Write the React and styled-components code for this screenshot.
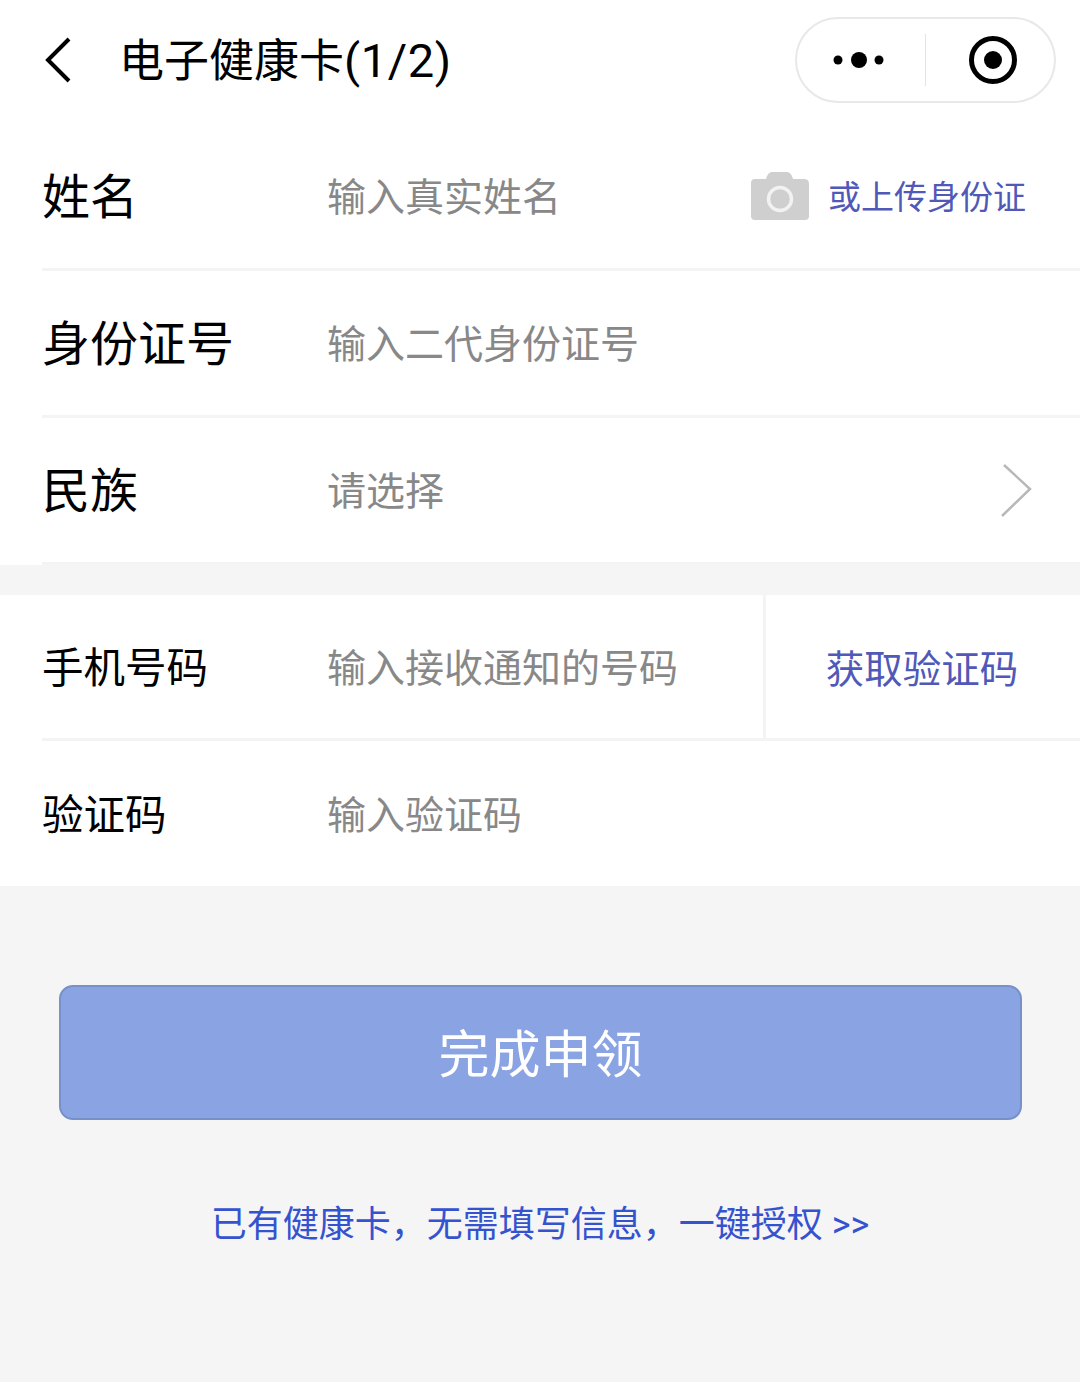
import React from "react";
import styled, { createGlobalStyle } from "styled-components";

const GlobalStyle = createGlobalStyle`
  html, body {
    margin: 0;
    padding: 0;
    background: #f5f5f5;
  }
  * {
    box-sizing: border-box;
  }
`;

const Page = styled.div`
  width: 1080px;
  height: 1382px;
  overflow: hidden;
  background: #f5f5f5;
  font-family: Roboto, "Noto Sans CJK SC", sans-serif;
  color: #000;
`;

const NavBar = styled.header`
  height: 124px;
  background: #fff;
  display: flex;
  align-items: center;
  padding: 0 24px 0 45px;
`;

const BackIcon = styled.svg`
  width: 28px;
  height: 46px;
  margin-top: -4px;
  flex: none;
`;

const NavTitle = styled.h1`
  margin: -2px 0 0 46px;
  flex: 1;
  font-size: 45px;
  font-weight: 400;
  line-height: 60px;
  color: #000;
`;

const TitleCount = styled.span`
  font-size: 47px;
  letter-spacing: 0.6px;
`;

const Capsule = styled.div`
  width: 261px;
  height: 86px;
  margin-top: -4px;
  border: 2px solid #e8e8e8;
  border-radius: 43px;
  display: flex;
  align-items: center;
`;

const CapsuleSide = styled.div`
  flex: none;
  width: ${(p) => (p.$divided ? 129 : 128)}px;
  height: 52px;
  display: flex;
  align-items: center;
  justify-content: center;
  padding-left: ${(p) => (p.$divided ? 6 : 0)}px;
  padding-right: ${(p) => (p.$divided ? 0 : 4)}px;
  border-left: ${(p) => (p.$divided ? "1px solid #e4e4e4" : "none")};
`;

const Section = styled.section`
  background: #fff;
`;

const Row = styled.div`
  height: ${(p) => p.$height || 147}px;
  margin-left: 42px;
  display: flex;
  align-items: center;
  border-bottom: ${(p) => (p.$plain ? "none" : "3px solid #f4f4f4")};
`;

const Label = styled.div`
  width: 285px;
  flex: none;
  padding-top: ${(p) => (p.$small ? 5 : 3)}px;
  font-size: ${(p) => (p.$small ? 41.5 : 48)}px;
  line-height: 60px;
  color: #000;
`;

const Placeholder = styled.div`
  flex: 1;
  padding-top: ${(p) => (p.$low ? 5 : 3)}px;
  font-size: 39px;
  line-height: 54px;
  color: #888;
`;

const UploadWrap = styled.div`
  display: flex;
  align-items: center;
  gap: 19px;
  padding: 0 54px 0 0;
`;

const UploadText = styled.span`
  padding-top: 3px;
  font-size: 33px;
  line-height: 46px;
  color: #5058b8;
`;

const Chevron = styled.svg`
  width: 34px;
  height: 56px;
  margin-right: 48px;
  flex: none;
`;

const Gap = styled.div`
  height: 30px;
`;

const CodeButton = styled.div`
  width: 317px;
  align-self: stretch;
  display: flex;
  align-items: center;
  justify-content: center;
  padding: 0 2px 2px 0;
  border-left: 3px solid #f4f4f4;
  font-size: 38.5px;
  color: #5058b8;
`;

const SubmitWrap = styled.div`
  padding: 99px 58px 0 59px;
`;

const SubmitButton = styled.button`
  display: block;
  width: 100%;
  height: 135px;
  padding: 0 0 4px;
  border: 2px solid #7790c8;
  border-radius: 14px;
  background: #8aa3e2;
  color: #fff;
  font-family: inherit;
  font-size: 51px;
`;

const AuthLink = styled.div`
  margin-top: 80px;
  text-align: center;
  font-size: 36px;
  line-height: 50px;
  color: #3553cf;
`;

export default function App() {
  return (
    <Page>
      <GlobalStyle />
      <NavBar>
        <BackIcon viewBox="0 0 28 46">
          <path d="M24 2 L3 23 L24 44" fill="none" stroke="#000" strokeWidth="4" />
        </BackIcon>
        <NavTitle>
          电子健康卡<TitleCount>(1/2)</TitleCount>
        </NavTitle>
        <Capsule>
          <CapsuleSide>
            <svg width="52" height="18" viewBox="0 0 52 18">
              <circle cx="5" cy="9" r="4.5" fill="#000" />
              <circle cx="26" cy="9" r="8" fill="#000" />
              <circle cx="46" cy="9" r="4.5" fill="#000" />
            </svg>
          </CapsuleSide>
          <CapsuleSide $divided>
            <svg width="48" height="48" viewBox="0 0 48 48">
              <circle cx="24" cy="24" r="21.5" fill="none" stroke="#000" strokeWidth="5" />
              <circle cx="24" cy="24" r="9" fill="#000" />
            </svg>
          </CapsuleSide>
        </Capsule>
      </NavBar>

      <Section>
        <Row>
          <Label>姓名</Label>
          <Placeholder>输入真实姓名</Placeholder>
          <UploadWrap>
            <svg width="58" height="50" viewBox="0 0 58 50">
              <path
                d="M4 8 H15 Q17 1 21 1 H36 Q40 1 42 8 H53 Q58 8 58 13 V45 Q58 49 54 49 H4 Q0 49 0 45 V12 Q0 8 4 8 Z"
                fill="#cfcfcf"
              />
              <circle cx="29" cy="28" r="11.5" fill="#cfcfcf" stroke="#f2f2f2" strokeWidth="3.5" />
            </svg>
            <UploadText>或上传身份证</UploadText>
          </UploadWrap>
        </Row>
        <Row>
          <Label>身份证号</Label>
          <Placeholder>输入二代身份证号</Placeholder>
        </Row>
        <Row>
          <Label>民族</Label>
          <Placeholder>请选择</Placeholder>
          <Chevron viewBox="0 0 34 56">
            <path d="M6 3 L32 27 L4 54" fill="none" stroke="#b8b8b8" strokeWidth="2.5" />
          </Chevron>
        </Row>
      </Section>

      <Gap />

      <Section>
        <Row $height={146}>
          <Label $small>手机号码</Label>
          <Placeholder $low>输入接收通知的号码</Placeholder>
          <CodeButton>获取验证码</CodeButton>
        </Row>
        <Row $plain $height={145}>
          <Label $small>验证码</Label>
          <Placeholder $low>输入验证码</Placeholder>
        </Row>
      </Section>

      <SubmitWrap>
        <SubmitButton>完成申领</SubmitButton>
      </SubmitWrap>

      <AuthLink>已有健康卡，无需填写信息，一键授权 &gt;&gt;</AuthLink>
    </Page>
  );
}
